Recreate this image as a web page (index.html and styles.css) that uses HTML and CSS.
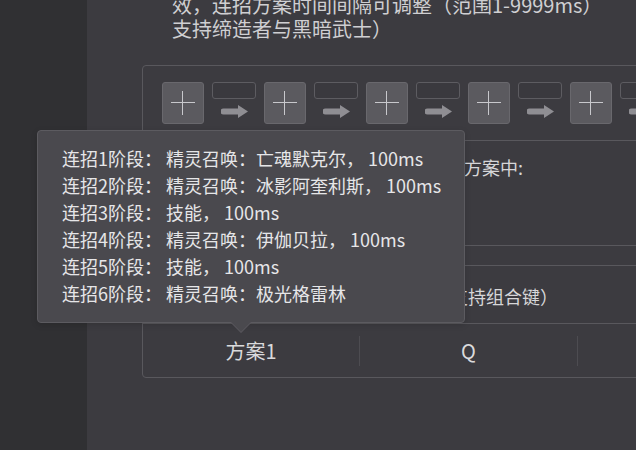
FILE: index.html
```html
<!DOCTYPE html>
<html lang="zh">
<head>
    <meta charset="UTF-8">
    <meta name="viewport" content="width=device-width, initial-scale=1.0">
    <title>连招方案</title>
    <link rel="stylesheet" href="styles.css">
</head>
<body>
    <div class="app">
        <aside class="sidebar"></aside>
        <main class="content">
            <p class="desc">效，连招方案时间间隔可调整（范围1-9999ms）<br>支持缔造者与黑暗武士）</p>

            <section class="panel">
                <div class="slots" id="slots">
                    <!-- 连招槽位由脚本生成 -->
                </div>
                <div class="panel-body">
                    <p>选择技能或精灵召唤，将其添加到当前方案中:</p>
                </div>
            </section>

            <section class="panel plan-panel">
                <div class="plan-head">双击方案名称即可设置触发快捷键（支持组合键）</div>
                <div class="plan-row">
                    <div class="cell">方案1</div>
                    <div class="cell">Q</div>
                    <div class="cell"></div>
                </div>
            </section>
        </main>

        <div class="tooltip">
            <ul>
                <li>连招1阶段： 精灵召唤：亡魂默克尔， 100ms</li>
                <li>连招2阶段： 精灵召唤：冰影阿奎利斯， 100ms</li>
                <li>连招3阶段： 技能， 100ms</li>
                <li>连招4阶段： 精灵召唤：伊伽贝拉， 100ms</li>
                <li>连招5阶段： 技能， 100ms</li>
                <li>连招6阶段： 精灵召唤：极光格雷林</li>
            </ul>
        </div>
    </div>

    <script>
        // 生成连招槽位：加号按钮 + 间隔输入框 + 箭头
        const plusSvg = '<svg width="24" height="24" viewBox="0 0 24 24"><path d="M0 11.5h24M11.5 0v24" stroke="#c8c8cc" stroke-width="1"/></svg>';
        const arrowSvg = '<svg width="27" height="13" viewBox="0 0 27 13"><path d="M2.5 3.5H17V0l10 6.5L17 13V9.5H2.5a3 3 0 0 1 0-6z" fill="#8f8e93"/></svg>';
        const slots = document.getElementById('slots');
        for (let i = 0; i < 6; i++) {
            const add = document.createElement('div');
            add.className = 'slot-add';
            add.innerHTML = plusSvg;
            slots.appendChild(add);

            const link = document.createElement('div');
            link.className = 'slot-link';
            link.innerHTML = '<div class="delay"></div>' + arrowSvg;
            slots.appendChild(link);
        }
    </script>
</body>
</html>
```

FILE: styles.css
```css
html, body {
    margin: 0;
    padding: 0;
    overflow: hidden;
}
body {
    font-family: "Noto Sans CJK SC", "Noto Sans", sans-serif;
    background-color: #3c3b40;
    color: #d6d6d8;
}
.app {
    position: relative;
    display: flex;
    height: 450px;
}
.sidebar {
    width: 87px;
    flex-shrink: 0;
    background-color: #303033;
}
.content {
    flex: 1;
    padding-left: 55px;
}
.desc {
    margin: -7px 0 0;
    padding-left: 30px;
    font-size: 20px;
    line-height: 24px;
    color: #cfcfd2;
    white-space: nowrap;
}
.panel {
    width: 560px;
    margin-top: 24px;
    border: 1px solid #59585d;
    border-radius: 4px;
}
.slots {
    display: flex;
    padding: 16px 19px 16px;
    border-bottom: 1px solid #59585d;
    white-space: nowrap;
}
.slot-add {
    width: 42px;
    height: 42px;
    flex-shrink: 0;
    box-sizing: border-box;
    display: flex;
    align-items: center;
    justify-content: center;
    background-color: #5b5a5f;
    border: 1px solid #69686d;
    border-radius: 3px;
}
.slot-link {
    width: 44px;
    flex-shrink: 0;
    margin: 0 8px;
    display: flex;
    flex-direction: column;
    align-items: center;
}
.delay {
    width: 44px;
    height: 17px;
    box-sizing: border-box;
    border: 1px solid #5d5c61;
    border-radius: 3px;
    background-color: #3a393e;
    margin-bottom: 6px;
}
.panel-body {
    height: 104px;
    box-sizing: border-box;
    padding: 13px 20px 0 15px;
}
.panel-body p {
    margin: 0;
    font-size: 18px;
    line-height: 27px;
    white-space: nowrap;
}
.plan-panel {
    margin-top: 19px;
}
.plan-head {
    padding: 17px 20px 13px 19px;
    font-size: 18px;
    line-height: 27px;
    border-bottom: 1px solid #59585d;
    white-space: nowrap;
}
.plan-row {
    display: flex;
    padding: 12px 0 11px;
}
.cell {
    width: 217px;
    height: 30px;
    flex-shrink: 0;
    border-right: 1px solid #4d4c51;
    font-size: 20px;
    line-height: 30px;
    text-align: center;
    color: #dadadc;
}
.cell:first-child {
    width: 216px;
}
.tooltip {
    position: absolute;
    left: 37px;
    top: 130px;
    width: 428px;
    height: 193px;
    box-sizing: border-box;
    padding: 14px 24px 0;
    background-color: #4a494e;
    border: 1px solid #5c5b60;
    border-radius: 4px;
    box-shadow: 0 2px 6px rgba(0, 0, 0, 0.15);
}
.tooltip ul {
    list-style: none;
    margin: 0;
    padding: 0;
}
.tooltip li {
    font-size: 18px;
    line-height: 27px;
    color: #e6e6e8;
    white-space: nowrap;
}
.tooltip::before,
.tooltip::after {
    content: "";
    position: absolute;
    left: 192px;
    width: 0;
    height: 0;
    border-left: 11px solid transparent;
    border-right: 11px solid transparent;
}
.tooltip::before {
    top: 191px;
    border-top: 11px solid #5c5b60;
}
.tooltip::after {
    top: 190px;
    border-top: 11px solid #4a494e;
}
```
